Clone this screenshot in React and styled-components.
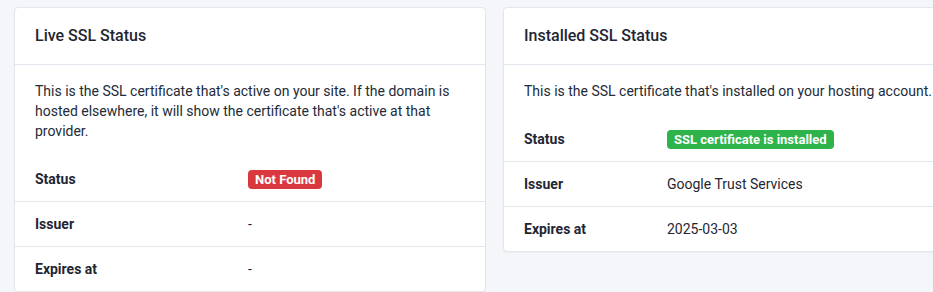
import React from "react";
import styled, { createGlobalStyle } from "styled-components";

const Global = createGlobalStyle`
  html, body {
    margin: 0;
    padding: 0;
    background: #f5f6fa;
    overflow: hidden;
  }
  body {
    font-family: Roboto, "Noto Sans", Arial, sans-serif;
    color: #1f2633;
  }
`;

const Page = styled.div`
  display: grid;
  grid-template-columns: 472px 472px;
  column-gap: 17px;
  align-items: start;
  padding: 7px 0 0 14px;
  width: max-content;
`;

const Card = styled.section`
  background: #ffffff;
  border: 1px solid #e3e6ec;
  border-radius: 4px;
  box-shadow: 0 1px 2px rgba(20, 30, 50, 0.04);
  overflow: hidden;
`;

const CardHeader = styled.header`
  height: 56px;
  display: flex;
  align-items: center;
  padding: 0 20px;
  border-bottom: 1px solid #e3e6ec;
`;

const Title = styled.h2`
  margin: 0;
  font-size: 16px;
  font-weight: 500;
  color: #1f2633;
  line-height: 20px;
`;

const Description = styled.p`
  margin: 0;
  padding: 16px 20px 16px;
  font-size: 14px;
  line-height: 20px;
  color: #232b38;
  white-space: ${(p) => (p.$nowrap ? "nowrap" : "normal")};
`;

const Rows = styled.div`
  display: flex;
  flex-direction: column;
`;

const Row = styled.div`
  display: grid;
  grid-template-columns: ${(p) => p.$labelWidth}px 1fr;
  align-items: center;
  height: 44px;
  box-sizing: border-box;
  padding: 0 20px;
  line-height: 20px;
  font-size: 14px;
  & + & {
    border-top: 1px solid #e3e6ec;
    height: 45px;
  }
`;

const Label = styled.span`
  font-weight: 700;
  color: #1f2633;
`;

const Value = styled.span`
  display: flex;
  align-items: center;
  height: 20px;
  color: #1f2633;
  white-space: nowrap;
`;

const Badge = styled.span`
  display: inline-block;
  height: 19px;
  line-height: 19px;
  padding: 0 7px;
  border-radius: 4px;
  font-size: 13px;
  font-weight: 700;
  color: #ffffff;
  background: ${(p) => (p.$tone === "success" ? "#2db34a" : "#d9393e")};
  white-space: nowrap;
`;

function StatusCard({ title, description, nowrap, labelWidth, rows }) {
  return (
    <Card>
      <CardHeader>
        <Title>{title}</Title>
      </CardHeader>
      <Description $nowrap={nowrap}>{description}</Description>
      <Rows>
        {rows.map((r) => (
          <Row key={r.label} $labelWidth={labelWidth}>
            <Label>{r.label}</Label>
            <Value>{r.value}</Value>
          </Row>
        ))}
      </Rows>
    </Card>
  );
}

export default function App() {
  return (
    <>
      <Global />
      <Page>
        <StatusCard
          title="Live SSL Status"
          description="This is the SSL certificate that's active on your site. If the domain is hosted elsewhere, it will show the certificate that's active at that provider."
          labelWidth={213}
          rows={[
            { label: "Status", value: <Badge $tone="danger">Not Found</Badge> },
            { label: "Issuer", value: "-" },
            { label: "Expires at", value: "-" },
          ]}
        />
        <StatusCard
          title="Installed SSL Status"
          description="This is the SSL certificate that's installed on your hosting account."
          nowrap
          labelWidth={143}
          rows={[
            {
              label: "Status",
              value: <Badge $tone="success">SSL certificate is installed</Badge>,
            },
            { label: "Issuer", value: "Google Trust Services" },
            { label: "Expires at", value: "2025-03-03" },
          ]}
        />
      </Page>
    </>
  );
}
